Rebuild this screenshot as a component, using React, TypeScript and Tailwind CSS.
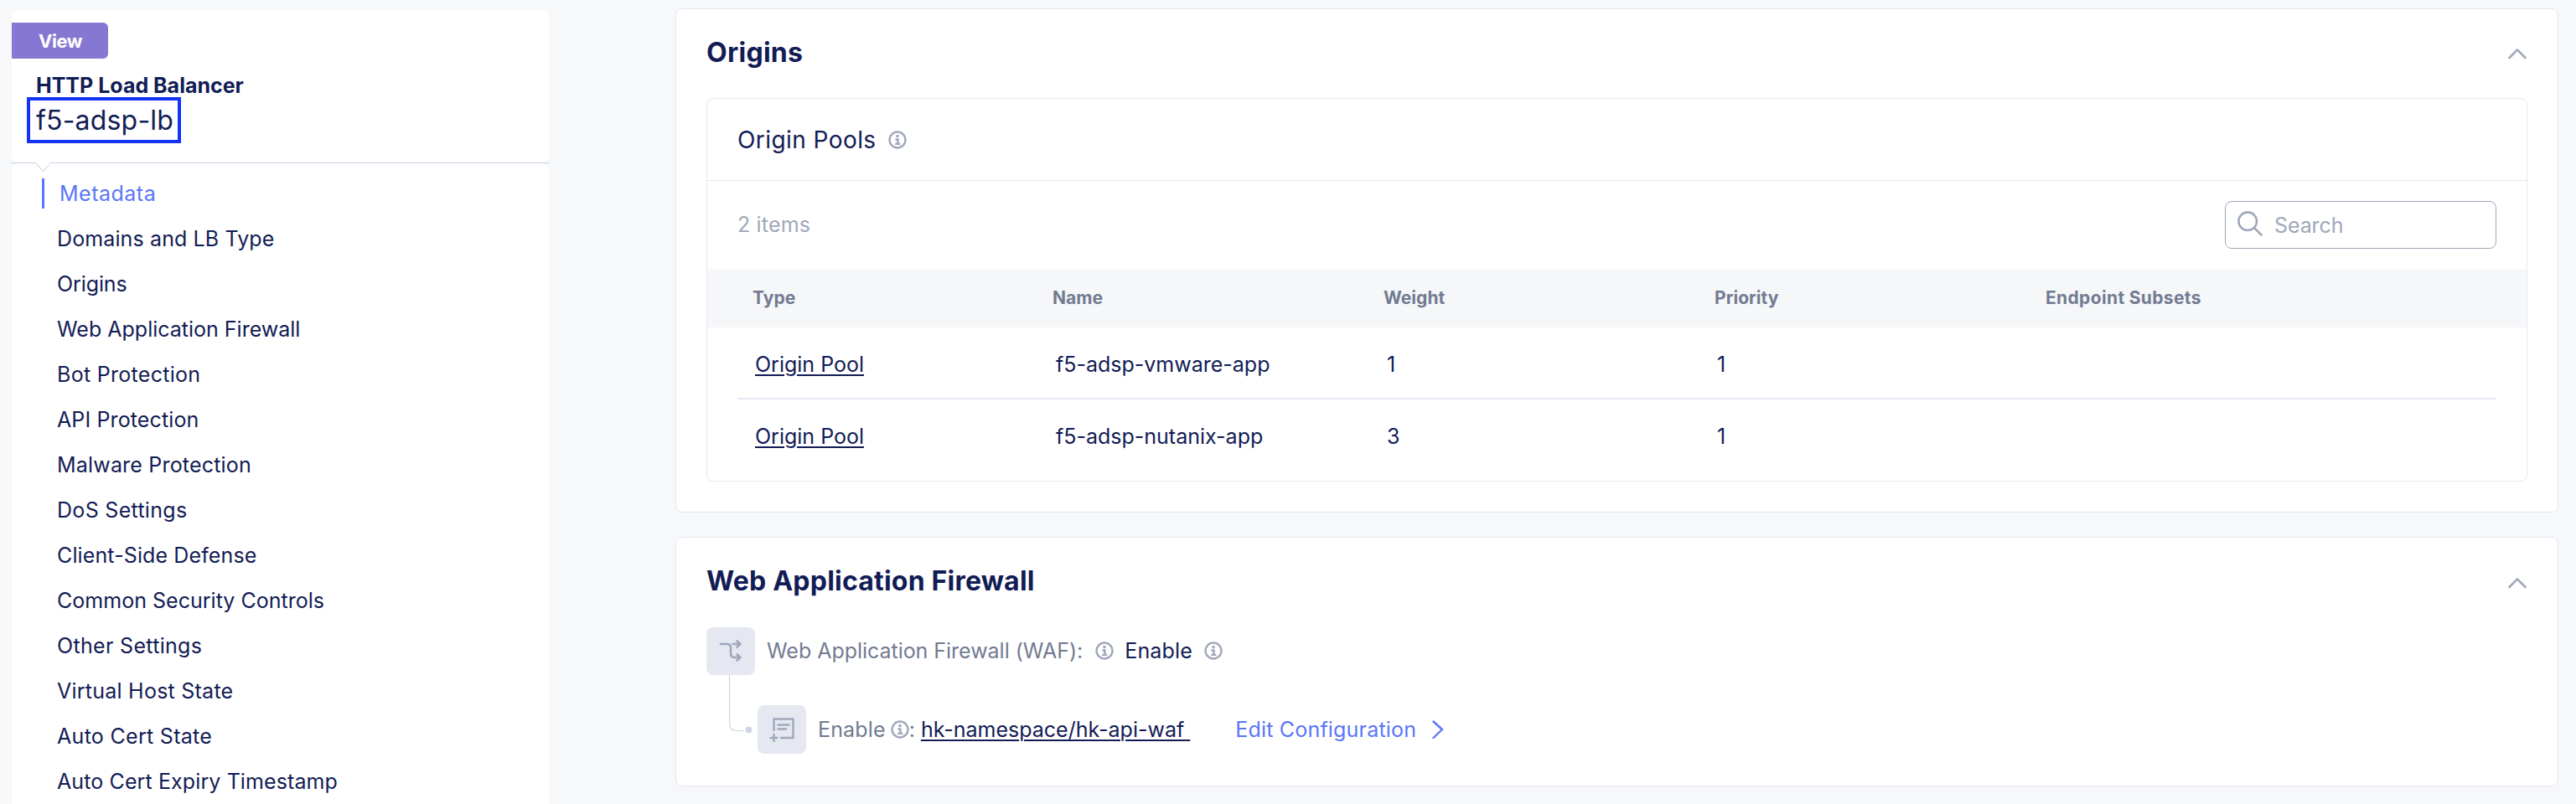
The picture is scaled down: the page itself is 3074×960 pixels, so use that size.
import React from "react";

const navItems = [
  { label: "Domains and LB Type", tracking: "tracking-[0.12px]" },
  { label: "Origins", tracking: "tracking-[-0.1px]" },
  { label: "Web Application Firewall", tracking: "tracking-normal" },
  { label: "Bot Protection", tracking: "tracking-[0.29px]" },
  { label: "API Protection", tracking: "tracking-[0.12px]" },
  { label: "Malware Protection", tracking: "tracking-[0.19px]" },
  { label: "DoS Settings", tracking: "tracking-[0.3px]" },
  { label: "Client-Side Defense", tracking: "tracking-[0.12px]" },
  { label: "Common Security Controls", tracking: "tracking-[0.02px]" },
  { label: "Other Settings", tracking: "tracking-[0.32px]" },
  { label: "Virtual Host State", tracking: "tracking-[0.24px]" },
  { label: "Auto Cert State", tracking: "tracking-[0.3px]" },
  { label: "Auto Cert Expiry Timestamp", tracking: "tracking-[0.11px]" },
];

const pools = [
  { name: "f5-adsp-vmware-app", weight: 1, priority: 1 },
  { name: "f5-adsp-nutanix-app", weight: 3, priority: 1 },
];

function InfoIcon({ className = "" }: { className?: string }) {
  return (
    <svg viewBox="0 0 22 22" className={`h-[22px] w-[22px] shrink-0 text-[#a0a8ba] ${className}`} fill="none" stroke="currentColor">
      <circle cx="11" cy="11" r="9.5" strokeWidth="2.4" />
      <circle cx="11" cy="6.6" r="1.8" fill="currentColor" stroke="none" />
      <path d="M8.4 10.5H11.4V15.5" strokeWidth="2.5" />
      <path d="M8.2 15.9H14.3" strokeWidth="2.2" />
    </svg>
  );
}

function ChevronUp() {
  return (
    <svg viewBox="0 0 24 14" className="h-[14px] w-[24px]" fill="none" stroke="#a0a8ba" strokeWidth="2.6" strokeLinecap="round" strokeLinejoin="round">
      <path d="M2.5 12 12 2.4 21.5 12" />
    </svg>
  );
}

function Sidebar() {
  return (
    <aside className="flex w-[641px] shrink-0 flex-col">
      <div className="h-[182px] rounded-lg bg-white pt-[15px]">
        <div className="flex h-[43px] w-[115px] items-center rounded-r-md bg-[#8678d2] pl-[32px] text-[22px] font-bold leading-none tracking-[-0.5px] text-white">
          View
        </div>
        <div className="mt-[16px] ml-[29px] h-[30px] text-[25px] font-bold leading-[32px]">HTTP Load Balancer</div>
        <div className="ml-[18px] flex h-[55px] w-[184px] items-center border-4 border-[#1433f5] pl-[7px] text-[32px] leading-[46px] tracking-[0.19px] whitespace-nowrap">
          f5-adsp-lb
        </div>
      </div>
      <div className="h-px bg-[#cbd2e4]" />
      <nav className="relative flex grow flex-col rounded-t-lg bg-white">
        <svg viewBox="0 0 18 12" className="absolute -top-[1px] left-[28px] h-[12px] w-[18px]">
          <path d="M1 0 9.5 10.5 17 1.5V0Z" fill="#fff" />
          <path d="M1 1.5 9.5 10.5 17 2.5" fill="none" stroke="#dcdfea" strokeWidth="1.3" />
        </svg>
        <div className="mt-[18px] ml-[36px] flex h-[36px] items-center border-l-[3px] border-[#5b76f7] pl-[18px] text-[25px] leading-[26px] tracking-[0.5px] text-[#5b76f7]">
          Metadata
        </div>
        <div className="mt-[9px] flex flex-col pl-[54px]">
          {navItems.map(({ label, tracking }) => (
            <div key={label} className={`flex h-[54px] items-center text-[25px] leading-[26px] whitespace-nowrap ${tracking}`}>
              {label}
            </div>
          ))}
        </div>
      </nav>
    </aside>
  );
}

function OriginsCard() {
  return (
    <section className="h-[602px] rounded-lg border border-[#e4e7f1] bg-white px-[36px]">
      <header className="flex h-[106px] items-center justify-between">
        <h2 className="pb-[2px] text-[32px] font-bold leading-none tracking-[0.27px]">Origins</h2>
        <ChevronUp />
      </header>
      <div className="h-[458px] rounded-lg border border-[#e6e8f2]">
        <div className="flex h-[98px] items-center gap-[14px] border-b border-[#e6e8f2] pl-[36px]">
          <h3 className="text-[28px] leading-none tracking-[0.43px]">Origin Pools</h3>
          <InfoIcon />
        </div>
        <div className="flex h-[105px] items-center justify-between px-[36px]">
          <div className="pb-px text-[25px] leading-[26px] tracking-[0.16px] text-[#a0a8ba]">2 items</div>
          <div className="flex h-[57px] w-[324px] items-center rounded-lg border border-[#a0a8ba] pl-[14px]">
            <svg viewBox="0 0 30 30" className="mb-1 h-[30px] w-[30px]" fill="none" stroke="#a0a8ba" strokeWidth="2.6" strokeLinecap="round">
              <circle cx="12.2" cy="12.2" r="10.8" />
              <path d="M20 20 28.5 28.5" />
            </svg>
            <span className="ml-[14px] text-[25px] leading-[26px] tracking-[-0.1px] text-[#a0a8ba]">Search</span>
          </div>
        </div>
        <div className="flex h-[70px] items-center bg-[#f6f7f9] pl-[54px] text-[21px] font-bold leading-[22px] tracking-[0.05px] text-[#727b91]">
          <div className="w-[358px]">Type</div>
          <div className="w-[395px]">Name</div>
          <div className="w-[395px]">Weight</div>
          <div className="w-[395px]">Priority</div>
          <div className="tracking-[0.35px]">Endpoint Subsets</div>
        </div>
        <div className="mx-[36px]">
          {pools.map((pool) => (
            <div
              key={pool.name}
              className="flex h-[86px] items-center border-b-2 border-[#e4e8f1] pt-[2px] pl-[21px] text-[25px] leading-[32px] first:pt-[4px] last:border-b-0"
            >
              <div className="w-[359px]">
                <a className="underline decoration-2 underline-offset-[3px]">Origin Pool</a>
              </div>
              <div className="w-[395px]">{pool.name}</div>
              <div className="w-[394px]">{pool.weight}</div>
              <div>{pool.priority}</div>
            </div>
          ))}
        </div>
      </div>
    </section>
  );
}

function WafCard() {
  return (
    <section className="mt-[29px] h-[298px] rounded-lg border border-[#e4e7f1] bg-white px-[36px]">
      <header className="flex h-[107px] items-center justify-between">
        <h2 className="pb-[3px] text-[32px] font-bold leading-none tracking-[0.21px]">Web Application Firewall</h2>
        <ChevronUp />
      </header>
      <div className="flex h-[57px] items-center text-[25px] leading-[26px]">
        <div className="flex h-[57px] w-[58px] items-center justify-center rounded-lg bg-[#e5e8f1] pb-[2px]">
          <svg viewBox="0 0 28 28" className="h-[28px] w-[28px]" fill="none" stroke="#a0a8ba" strokeWidth="2.6" strokeLinecap="round" strokeLinejoin="round">
            <path d="M2 6H9.5Q14 6 14 10.5V17Q14 22 19 22H25" />
            <path d="M16.5 6H25M21.5 2.5 25.5 6 21.5 9.5M21.5 18.5 25.5 22 21.5 25.5" />
          </svg>
        </div>
        <div className="flex items-center pb-px">
          <span className="ml-[14px] tracking-[-0.03px] text-[#727b91]">Web Application Firewall (WAF):</span>
          <InfoIcon className="ml-[15px]" />
          <span className="ml-[13px] tracking-[0.2px]">Enable</span>
          <InfoIcon className="ml-[14px]" />
        </div>
      </div>
      <div className="flex text-[25px]">
        <svg viewBox="0 0 61 94" className="h-[94px] w-[61px]" fill="none">
          <path d="M27.5 0V57Q27.5 66.5 36 66.5H45" stroke="#cfd5e4" strokeWidth="1.2" />
          <circle cx="50.5" cy="65.5" r="3.9" fill="#cfd5e4" />
        </svg>
        <div className="mt-[36px] flex h-[58px] items-center leading-[26px]">
          <div className="flex h-[58px] w-[58px] items-center justify-center rounded-lg bg-[#e5e8f1]">
            <svg viewBox="0 0 30 30" className="h-[30px] w-[30px]" fill="none" stroke="#a0a8ba" strokeWidth="2.4" strokeLinecap="round" strokeLinejoin="round">
              <path d="M5.5 16V2.500H28.500V25H14" />
              <path d="M10.500 9.500H23.500M10.500 14.500H20M5.500 21V29M1.500 25H9.500" />
            </svg>
          </div>
          <div className="flex items-center">
            <span className="ml-[14px] tracking-[0.15px] text-[#727b91]">Enable</span>
            <InfoIcon className="ml-[6px]" />
            <span className="text-[#727b91]">:</span>
            <a className="ml-[7px] whitespace-pre underline decoration-2 underline-offset-[3px]">{"hk-namespace/hk-api-waf "}</a>
            <span className="ml-[54px] tracking-[0.19px] text-[#5b76f7]">Edit Configuration</span>
            <svg viewBox="0 0 14 24" className="ml-[19px] h-[24px] w-[14px]" fill="none" stroke="#5b76f7" strokeWidth="2.4" strokeLinecap="round" strokeLinejoin="round">
              <path d="M1.5 2.5 12 12 1.5 22" />
            </svg>
          </div>
        </div>
      </div>
    </section>
  );
}

export default function App() {
  return (
    <div className="flex h-[960px] w-[3074px] overflow-hidden bg-[#f7f8fa] pl-[14px] font-[Inter,sans-serif] text-[#121c55]">
      <div className="flex pt-[12px]">
        <Sidebar />
      </div>
      <main className="ml-[151px] flex w-[2247px] flex-col pt-[10px]">
        <OriginsCard />
        <WafCard />
      </main>
    </div>
  );
}
